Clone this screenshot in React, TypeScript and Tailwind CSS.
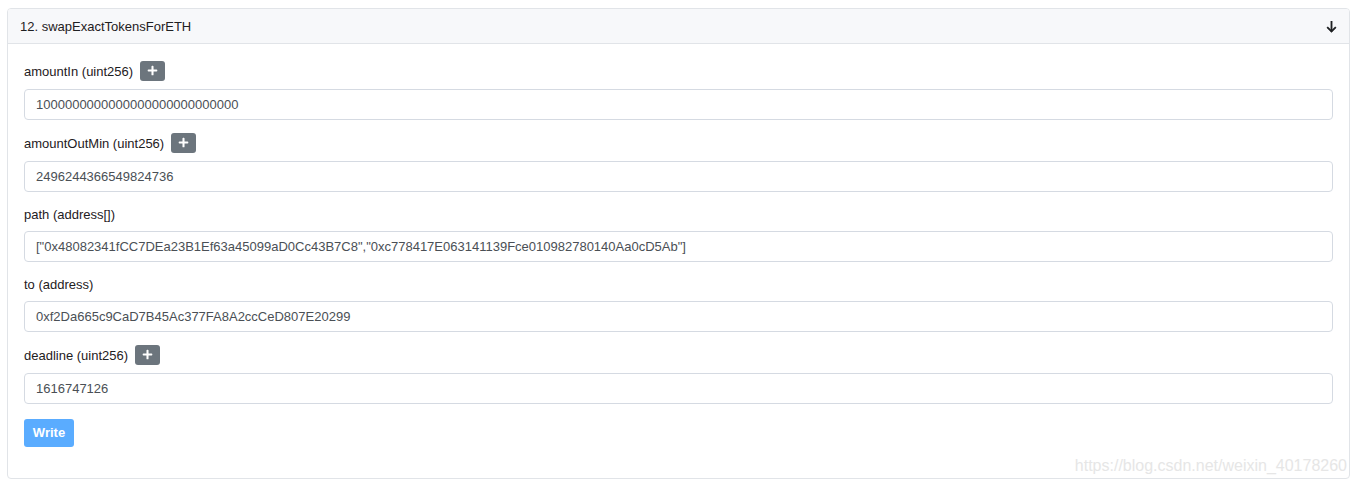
import { FaPlus } from "react-icons/fa"

interface Field {
  label: string
  value: string
  expandable?: boolean
}

const fields: Field[] = [
  { label: "amountIn (uint256)", value: "1000000000000000000000000000", expandable: true },
  { label: "amountOutMin (uint256)", value: "2496244366549824736", expandable: true },
  {
    label: "path (address[])",
    value: '["0x48082341fCC7DEa23B1Ef63a45099aD0Cc43B7C8","0xc778417E063141139Fce010982780140Aa0cD5Ab"]',
  },
  { label: "to (address)", value: "0xf2Da665c9CaD7B45Ac377FA8A2ccCeD807E20299" },
  { label: "deadline (uint256)", value: "1616747126", expandable: true },
]

function ArrowDown() {
  return (
    <svg width="13" height="13" viewBox="0 0 12 12" fill="none" stroke="#1e2022" strokeWidth="1.7">
      <path d="M6 1v9.5" />
      <path d="M2 6.5l4 4 4-4" />
    </svg>
  )
}

export default function App() {
  return (
    <div className="bg-white w-[1356px] h-[486px] pt-[8px] pl-[7px] font-['Liberation_Sans',Arial,sans-serif] text-[13px] text-[#1e2022]">
      <div className="relative w-[1343px] border border-[#e1e4e8] rounded-[4px] overflow-hidden">
        <div className="h-[35px] flex items-center justify-between pl-[12px] pr-[11px] bg-[#f7f8fa] border-b border-[#e1e4e8]">
          <span className="pt-[1px]">12. swapExactTokensForETH</span>
          <ArrowDown />
        </div>
        <div className="px-[16px] pt-[16px] pb-[31px]">
          {fields.map((f) => (
            <div key={f.label} className="mb-[12px]">
              <div className={`flex items-center gap-[7px] mb-[8px] ${f.expandable ? "h-[21px]" : "h-[19px]"}`}>
                <span className="pt-[3px]">{f.label}</span>
                {f.expandable && (
                  <button className="w-[25px] h-[20px] rounded-[3px] bg-[#6c757d] flex items-center justify-center">
                    <FaPlus className="w-[11px] h-[11px] text-white" />
                  </button>
                )}
              </div>
              <div className="h-[31px] border border-[#d5dae2] rounded-[4px] flex items-center px-[11px] text-[#4a4f55] whitespace-nowrap">
                {f.value}
              </div>
            </div>
          ))}
          <button className="mt-[3px] w-[50px] h-[28px] rounded-[3px] bg-[#5aacff] text-white font-bold text-[13px]">
            Write
          </button>
        </div>
        <div className="absolute right-[2px] bottom-[4px] text-[16px] text-[#e6e6e6] leading-none">
          https://blog.csdn.net/weixin_40178260
        </div>
      </div>
    </div>
  )
}
